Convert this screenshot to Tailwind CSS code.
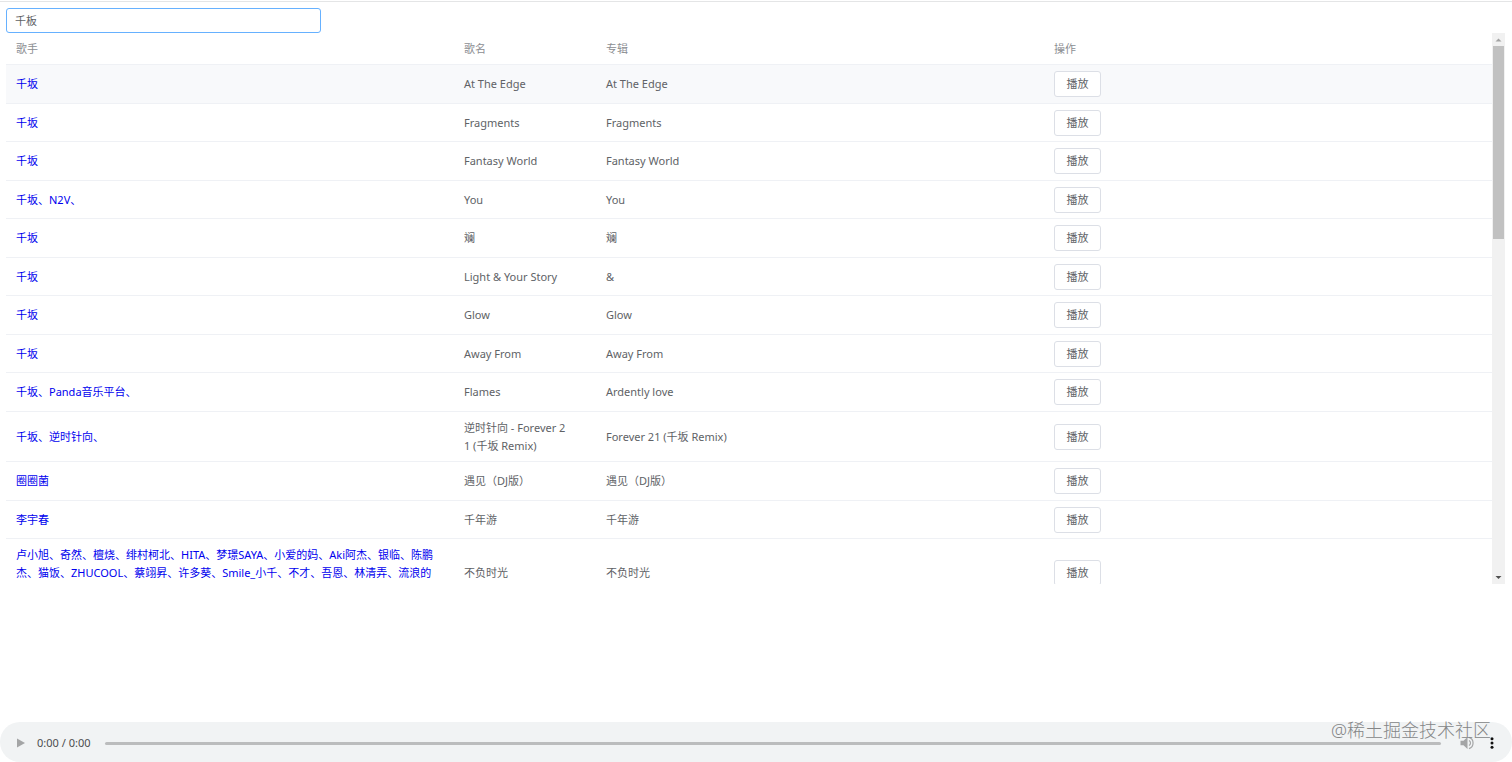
<!DOCTYPE html>
<html lang="zh-CN">
<head>
  <meta charset="UTF-8">
  <meta name="viewport" content="width=device-width, initial-scale=1.0">
  <title>音乐搜索</title>
  <script src="https://cdn.jsdelivr.net/npm/@tailwindcss/browser@4"></script>
</head>
<body class="flex flex-col min-h-screen pt-px bg-white text-[#606266] text-[11px] leading-[18px] font-['Noto_Sans','Noto_Sans_CJK_SC',sans-serif]">

  <main class="px-1.5 pt-1.5 border-t border-[#e4e5e6]">
    <input type="text" value="千板" aria-label="搜索歌曲"
    class="block w-[315px] h-[25px] px-2 pb-0.5 rounded-[3px] border border-[#66b1ff] bg-white outline-none">

    <div class="flex h-[551px] mr-px">
      <div class="grow overflow-hidden">
        <table class="w-full table-fixed border-separate border-spacing-0 text-left">
          <thead>
            <tr class="h-8 text-[#8c8e92]">
              <th class="px-2.5 border-b border-[#eff1f5] font-normal">歌手</th>
              <th class="w-[142px] px-2.5 border-b border-[#eff1f5] font-normal">歌名</th>
              <th class="px-2.5 border-b border-[#eff1f5] font-normal">专辑</th>
              <th class="px-2.5 border-b border-[#eff1f5] font-normal">操作</th>
            </tr>
          </thead>
          <tbody id="songs"></tbody>
        </table>
      </div>

      <!-- Scrollbar -->
      <div class="flex flex-col items-center w-[13px] bg-[#f1f1f1]" aria-hidden="true">
        <svg class="w-[13px] h-[13px] shrink-0" viewBox="0 0 13 13"><path d="M3.5 8.5h6l-3-3z" fill="#a3a3a3"/></svg>
        <div class="w-[11px] h-[193px] bg-[#c1c1c1]"></div>
        <svg class="w-[13px] h-[13px] mt-auto shrink-0" viewBox="0 0 13 13"><path d="M3.5 5h6l-3 3z" fill="#505050"/></svg>
      </div>
    </div>
  </main>

  <!-- Player -->
  <footer class="relative flex items-center h-10 mt-auto px-4 pt-0.5 rounded-full bg-[#f1f3f4]">
    <button type="button" disabled aria-label="播放" class="w-[10px]">
      <svg class="block w-[10px] h-[10px]" viewBox="0 0 10 10"><path d="M1 0.5v9l8-4.5z" fill="#a4a5a6"/></svg>
    </button>
    <span class="ml-[11px] text-[#4c4d4e] whitespace-nowrap">0:00 / 0:00</span>
    <input type="range" value="0" disabled aria-label="进度"
    class="grow h-[3px] ml-[15px] rounded-full bg-[#bbbcbd] appearance-none [&::-webkit-slider-thumb]:appearance-none [&::-webkit-slider-thumb]:opacity-0">
    <button type="button" disabled aria-label="音量" class="ml-[19px]">
      <svg class="block w-[14px] h-[14px]" viewBox="0 0 14 14">
        <path d="M0.5 4.7v4.6h3l4 3.8V0.9l-4 3.8z" fill="#a4a5a6"/>
        <path d="M9 4.4a3 3 0 0 1 0 5.2M9 1.4a5.9 5.9 0 0 1 0 11.2" fill="none" stroke="#a4a5a6" stroke-width="1.2"/>
      </svg>
    </button>
    <button type="button" aria-label="更多" class="ml-[14px]">
      <svg class="block w-2 h-3" viewBox="0 0 8 12" fill="#111">
        <circle cx="4" cy="1.8" r="1.5"/><circle cx="4" cy="6" r="1.5"/><circle cx="4" cy="10.2" r="1.5"/>
      </svg>
    </button>
    <span class="absolute right-[21px] -top-1 text-lg leading-6 text-[#858687] font-light whitespace-nowrap">@稀土掘金技术社区</span>
  </footer>

  <script>
    const songs = [
      ["千坂", "At The Edge", "At The Edge"],
      ["千坂", "Fragments", "Fragments"],
      ["千坂", "Fantasy World", "Fantasy World"],
      ["千坂、N2V、", "You", "You"],
      ["千坂", "斓", "斓"],
      ["千坂", "Light &amp; Your Story", "&amp;"],
      ["千坂", "Glow", "Glow"],
      ["千坂", "Away From", "Away From"],
      ["千坂、Panda音乐平台、", "Flames", "Ardently love"],
      ["千坂、逆时针向、", "逆时针向 - Forever 21 (千坂 Remix)", "Forever 21 (千坂 Remix)", "h-[50px]"],
      ["圈圈菌", "遇见（DJ版）", "遇见（DJ版）"],
      ["李宇春", "千年游", "千年游"],
      ["卢小旭、奇然、檀烧、绯村柯北、HITA、梦璟SAYA、小爱的妈、Aki阿杰、银临、陈鹏杰、猫饭、ZHUCOOL、蔡翊昇、许多葵、Smile_小千、不才、吾恩、林清弄、流浪的蛙蛙、", "不负时光", "不负时光", "h-[68px]"]
    ];

    document.getElementById("songs").innerHTML = songs.map(([artists, title, album, height], i) => `
      <tr class="${height || (i % 2 ? "h-[38px]" : "h-[39px]")} ${i === 0 ? "bg-[#f8f9fb]" : ""}">
        <td class="pl-2.5 pr-4 border-b border-[#eff1f5] break-all"><a href="#" class="text-[#0000ee]">${artists}</a></td>
        <td class="pl-2.5 pr-7 border-b border-[#eff1f5] break-all">${title}</td>
        <td class="px-2.5 border-b border-[#eff1f5] break-all">${album}</td>
        <td class="px-2.5 border-b border-[#eff1f5]">
          <button type="button" class="block w-[47px] h-[26px] rounded-[3px] border border-[#dcdfe6] bg-white">播放</button>
        </td>
      </tr>
    `).join("");
  </script>
</body>
</html>
